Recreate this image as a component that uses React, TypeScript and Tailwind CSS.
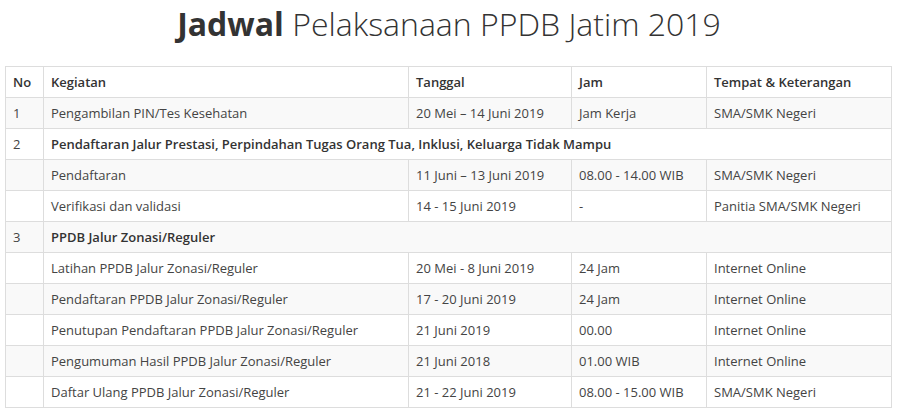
import React from 'react';

type Row = {
  no?: string;
  kegiatan: string;
  tanggal?: string;
  jam?: string;
  tempat?: string;
  group?: boolean;
};

const rows: Row[] = [
  { no: '1', kegiatan: 'Pengambilan PIN/Tes Kesehatan', tanggal: '20 Mei – 14 Juni 2019', jam: 'Jam Kerja', tempat: 'SMA/SMK Negeri' },
  { no: '2', kegiatan: 'Pendaftaran Jalur Prestasi, Perpindahan Tugas Orang Tua, Inklusi, Keluarga Tidak Mampu', group: true },
  { kegiatan: 'Pendaftaran', tanggal: '11 Juni – 13 Juni 2019', jam: '08.00 - 14.00 WIB', tempat: 'SMA/SMK Negeri' },
  { kegiatan: 'Verifikasi dan validasi', tanggal: '14 - 15 Juni 2019', jam: '-', tempat: 'Panitia SMA/SMK Negeri' },
  { no: '3', kegiatan: 'PPDB Jalur Zonasi/Reguler', group: true },
  { kegiatan: 'Latihan PPDB Jalur Zonasi/Reguler', tanggal: '20 Mei - 8 Juni 2019', jam: '24 Jam', tempat: 'Internet Online' },
  { kegiatan: 'Pendaftaran PPDB Jalur Zonasi/Reguler', tanggal: '17 - 20 Juni 2019', jam: '24 Jam', tempat: 'Internet Online' },
  { kegiatan: 'Penutupan Pendaftaran PPDB Jalur Zonasi/Reguler', tanggal: '21 Juni 2019', jam: '00.00', tempat: 'Internet Online' },
  { kegiatan: 'Pengumuman Hasil PPDB Jalur Zonasi/Reguler', tanggal: '21 Juni 2018', jam: '01.00 WIB', tempat: 'Internet Online' },
  { kegiatan: 'Daftar Ulang PPDB Jalur Zonasi/Reguler', tanggal: '21 - 22 Juni 2019', jam: '08.00 - 15.00 WIB', tempat: 'SMA/SMK Negeri' },
];

const cell = 'border border-[#dddddd] px-[7px] py-[5px] leading-[20px] text-left align-top';

export default function App() {
  return (
    <div className="bg-white w-[898px] h-[414px] overflow-hidden text-[#444444]" style={{ fontFamily: '"Open Sans", sans-serif' }}>
      <h1 className="text-center text-[32px] leading-[44px] pt-[2px] h-[66px] text-[#333333] font-light">
        <span className="font-bold">Jadwal</span> Pelaksanaan PPDB Jatim 2019
      </h1>

      <table className="ml-[5px] w-[886px] border-collapse table-fixed text-[13px]">
        <colgroup>
          <col className="w-[38px]" />
          <col className="w-[365px]" />
          <col className="w-[163px]" />
          <col className="w-[135px]" />
          <col className="w-[185px]" />
        </colgroup>
        <thead>
          <tr>
            <th className={`${cell} font-semibold text-[#333333]`}>No</th>
            <th className={`${cell} font-semibold text-[#333333]`}>Kegiatan</th>
            <th className={`${cell} font-semibold text-[#333333]`}>Tanggal</th>
            <th className={`${cell} font-semibold text-[#333333]`}>Jam</th>
            <th className={`${cell} font-semibold text-[#333333]`}>Tempat &amp; Keterangan</th>
          </tr>
        </thead>
        <tbody>
          {rows.map((r, i) => (
            <tr key={i} className={i % 2 === 0 ? 'bg-[#f9f9f9]' : 'bg-white'}>
              <td className={cell}>{r.no ?? ''}</td>
              {r.group ? (
                <td className={`${cell} font-semibold text-[#333333] whitespace-nowrap`} colSpan={4}>
                  {r.kegiatan}
                </td>
              ) : (
                <>
                  <td className={cell}>{r.kegiatan}</td>
                  <td className={cell}>{r.tanggal}</td>
                  <td className={cell}>{r.jam}</td>
                  <td className={cell}>{r.tempat}</td>
                </>
              )}
            </tr>
          ))}
        </tbody>
      </table>
    </div>
  );
}
